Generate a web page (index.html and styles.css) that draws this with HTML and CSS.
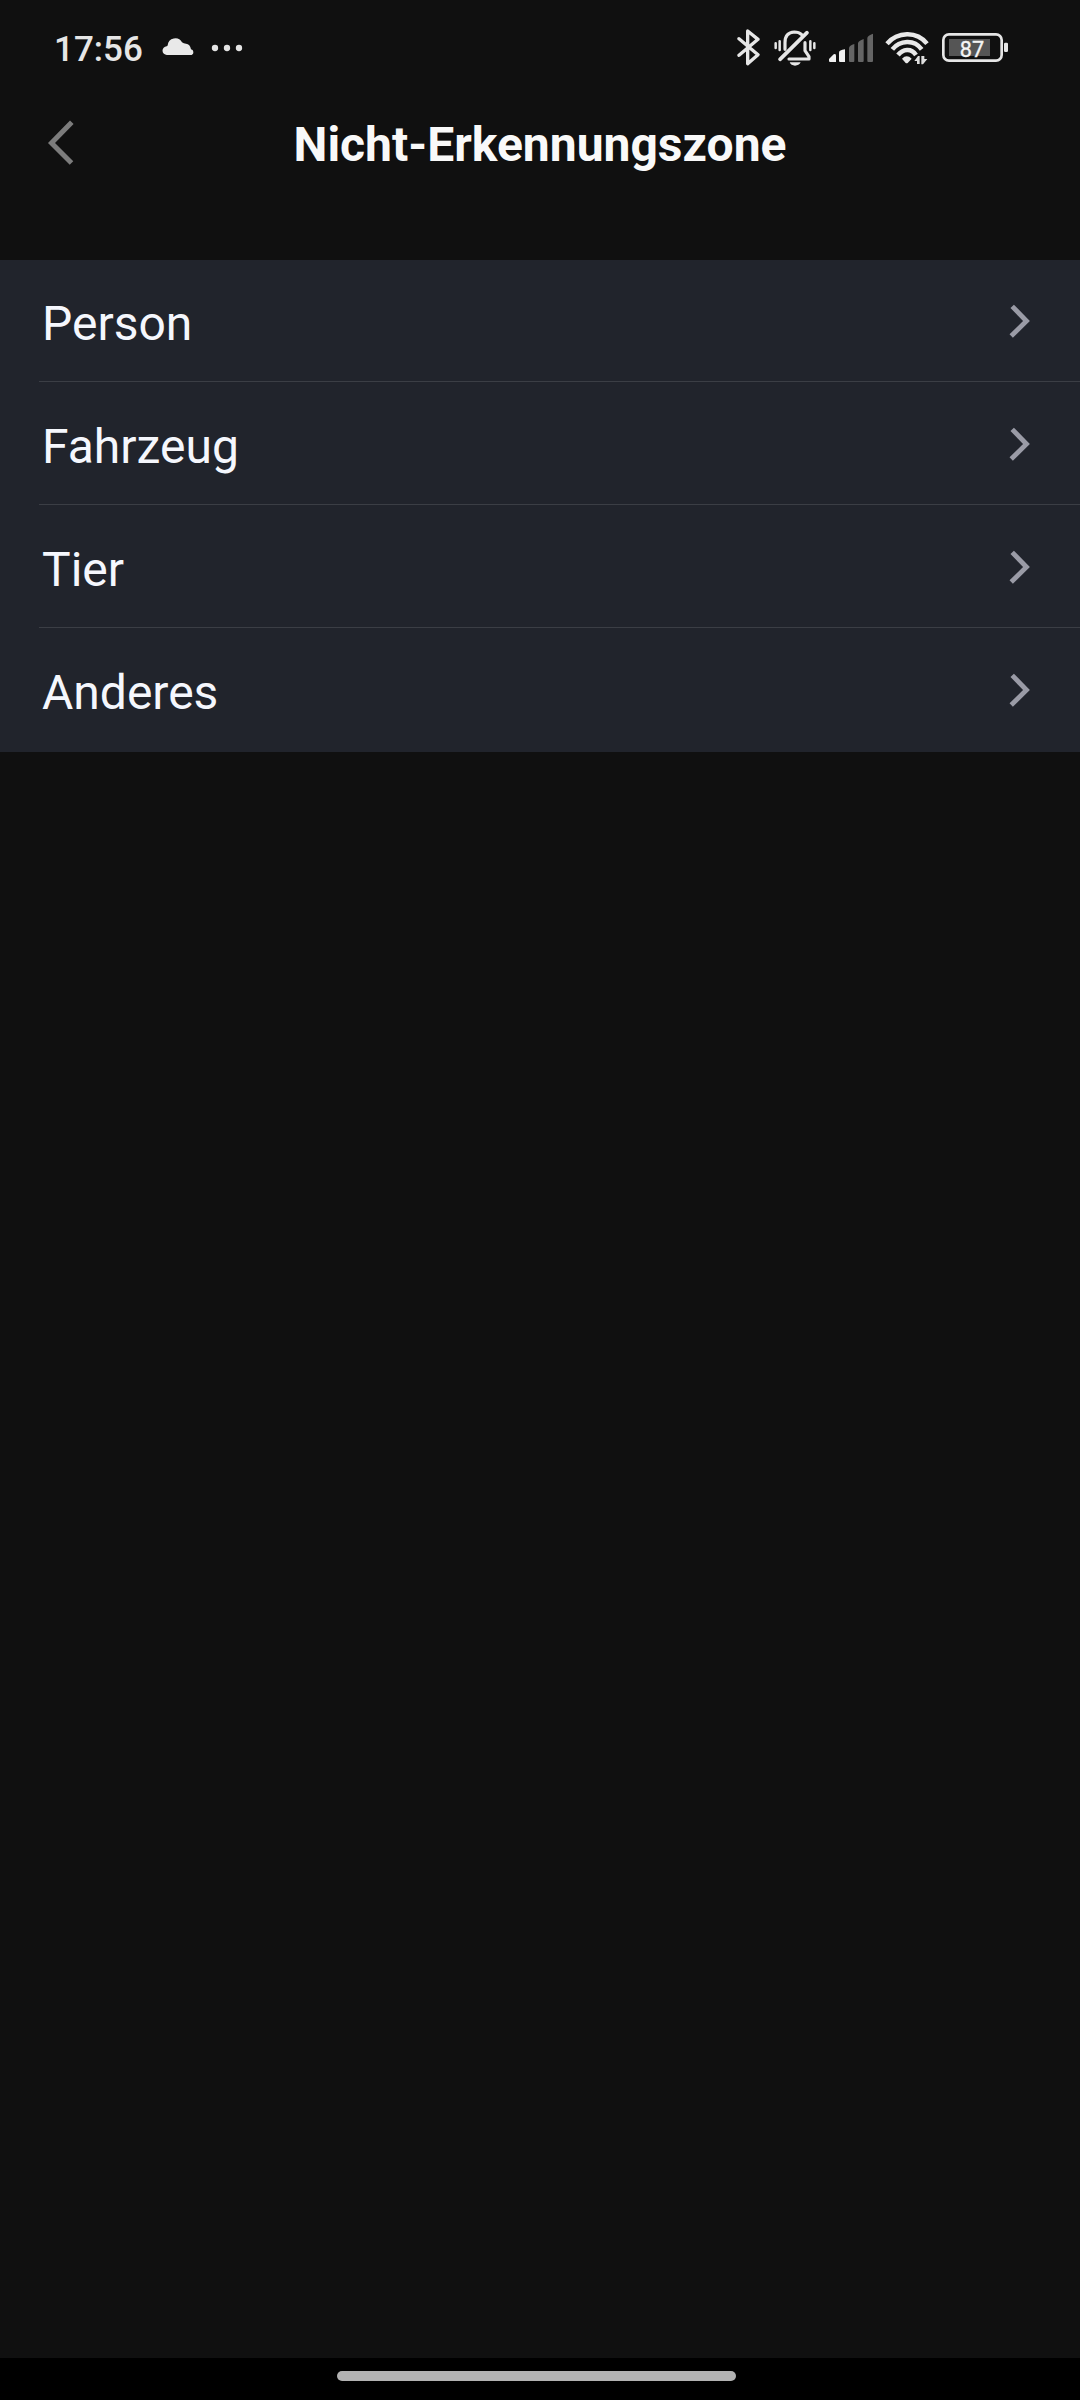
FILE: index.html
```html
<!DOCTYPE html>
<html lang="de">
<head>
<meta charset="utf-8">
<title>Nicht-Erkennungszone</title>
<link rel="stylesheet" href="styles.css">
</head>
<body>
<div class="screen">
  <div class="status-bar">
    <span class="clock">17:56</span>
    <svg class="cloud" viewBox="396 51 99 57"><path d="M411 105a13 13 0 0 1-1-26q2 0 3-3a23 23 0 0 1 43-9q5 4 12 4 12 1 15 17a9 9 0 0 1 2 17z" fill="#e9e9e9"/></svg>
    <svg class="dots" viewBox="543 72 96 24" fill="#e4e4e4"><circle cx="555" cy="84" r="9.5"/><circle cx="591" cy="84" r="9.5"/><circle cx="627" cy="84" r="9.5"/></svg>
    <div class="indicators">
      <svg class="bluetooth" viewBox="48 24 75 114"><path d="M57 56L114 104 83 131V33l31 25-57 48" fill="none" stroke="#e6e6e6" stroke-width="10" stroke-linejoin="round" stroke-linecap="round"/></svg>
      <svg class="bell" viewBox="159 27 132 114" fill="none" stroke="#e6e6e6" stroke-width="9.5" stroke-linecap="round" stroke-linejoin="round">
        <path d="M195 88V68Q195 37 223 36q14 0 22 8"/>
        <path d="M255 68V92L267 110V117H207"/>
        <path d="M180 118L261 38" stroke-width="11"/>
        <path d="M167 70v14M179 64v26M271 64v26M283 70v14" stroke-width="7.5"/>
        <path d="M209 127h33q-5 10-17 10t-16-10z" fill="#e6e6e6" stroke="none"/>
      </svg>
      <svg class="signal" viewBox="324 36 138 93">
        <path d="M327 117L341 103Q347 100 348 106V126H330Q327 126 327 122z" fill="#f0f0f0"/>
        <path d="M357 97Q357 91 375 88V126H360Q357 126 357 122z" fill="#f0f0f0"/>
        <path d="M387 84Q388 77 403 72V123Q403 126 400 126H390Q387 126 387 123zM414 70Q415 62 431 57V123Q431 126 428 126H417Q414 126 414 123zM442 54Q443 46 459 41V123Q459 126 456 126H445Q442 126 442 123z" fill="#656565"/>
      </svg>
      <svg class="wifi" viewBox="75 33 132 105">
        <g fill="none" stroke="#e8e8e8" stroke-width="13.5"><path d="M81 71Q105 44 141 43T201 71"/><path d="M97 88Q114 67 141 66T185 88"/><path d="M114 105Q125 91 141 90T168 105"/></g>
        <path d="M126 116Q140 102 155 116L143 129Q140 131 137 129z" fill="#e8e8e8"/>
        <path d="M163 123L174 108H179V132H171V123zM184 108H193V117H202L189 133H184z" fill="#dedede"/>
      </svg>
      <svg class="battery" viewBox="246 36 201 93">
        <rect x="267" y="57" width="123" height="51" fill="#555"/>
        <rect x="250" y="43" width="175" height="79" rx="17" fill="none" stroke="#e6e6e6" stroke-width="8"/>
        <rect x="432" y="68" width="12" height="28" rx="4" fill="#e6e6e6"/>
        <text class="charge" x="336" y="111" text-anchor="middle">87</text>
      </svg>
    </div>
  </div>
  <header class="title-bar">
    <svg class="back" viewBox="0 0 30 48"><path d="M26.8 4.2L6.5 25l20 20" fill="none" stroke="#7c7c7c" stroke-width="5"/></svg>
    <h1 class="title">Nicht-Erkennungszone</h1>
  </header>
  <ul class="list">
    <li class="row"><span>Person</span><svg class="chevron" viewBox="0 0 24 36"><path d="M5.2 3.3L19.5 18 4.2 33" /></svg></li>
    <li class="row"><span>Fahrzeug</span><svg class="chevron" viewBox="0 0 24 36"><path d="M5.2 3.3L19.5 18 4.2 33" /></svg></li>
    <li class="row"><span>Tier</span><svg class="chevron" viewBox="0 0 24 36"><path d="M5.2 3.3L19.5 18 4.2 33" /></svg></li>
    <li class="row"><span>Anderes</span><svg class="chevron" viewBox="0 0 24 36"><path d="M5.2 3.3L19.5 18 4.2 33" /></svg></li>
  </ul>
  <div class="nav-bar"><div class="handle"></div></div>
</div>
</body>
</html>
```
FILE: styles.css
```css
* { box-sizing: border-box; }
body { margin: 0; background: #101010; font-family: Roboto, sans-serif; }
svg { display: block; flex: none; }
.screen { width: 1080px; height: 2400px; display: flex; flex-direction: column; background: #101010; }

.status-bar { height: 96px; display: flex; align-items: flex-start; padding: 28px 71px 0 54px; }
.clock { width: 108px; font-size: 35px; line-height: 44px; font-weight: 500; color: #e6e6e6; }
.cloud { width: 33px; height: 19px; margin-top: 9px; }
.dots { width: 32px; height: 8px; margin: 16px 0 0 16px; }
.indicators { display: flex; align-items: flex-start; margin-left: auto; }
.bluetooth { width: 25px; height: 38px; }
.bell { width: 44px; height: 38px; margin: 1px 0 0 12px; }
.signal { width: 46px; height: 31px; margin: 4px 0 0 11px; }
.wifi { width: 44px; height: 35px; margin: 3px 0 0 11px; }
.battery { width: 67px; height: 31px; margin: 4px 0 0 13px; }
.charge { font-size: 65px; font-weight: 400; fill: #f4f4f4; stroke: #f4f4f4; stroke-width: 1; }

.title-bar { height: 164px; display: flex; align-items: flex-start; padding: 19px 75px 0 45px; }
.back { width: 30px; height: 48px; margin-top: 3px; }
.title { flex: 1; margin: 0; text-align: center; font-size: 48px; line-height: 60px; font-weight: 700; color: #f9f9f9; }

.list { margin: 0; padding: 0 0 0 39px; list-style: none; background: #21242c; color: #f5f7fd; }
.row { height: 123px; display: flex; align-items: center; justify-content: space-between; padding: 7px 49px 0 3px; border-bottom: 1px solid #3b3e45; font-size: 48px; line-height: 60px; }
.row:first-child { height: 122px; }
.row:last-child { height: 124px; border-bottom: 0; padding-bottom: 1px; }
.chevron { width: 24px; height: 36px; margin-top: -6px; fill: none; stroke: #9a9ba6; stroke-width: 4.8; }

.nav-bar { height: 42px; margin-top: auto; padding: 13px 0 0 337px; background: #000; }
.handle { width: 399px; height: 10px; border-radius: 5px; background: #b2b2b2; }
```
